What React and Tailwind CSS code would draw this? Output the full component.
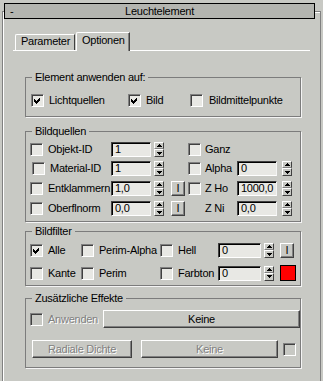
import React from 'react';

// 3ds Max style rollout: "Leuchtelement" / Optionen tab

function Check({ checked, disabled, className = '' }) {
  return (
    <span
      className={
        'flex items-center justify-center w-[13px] h-[13px] shrink-0 border border-t-[#808080] border-l-[#808080] border-b-white border-r-white shadow-[inset_1px_1px_0_#404040] ' +
        (disabled ? 'bg-[#c8c9c4] ' : 'bg-[#e8e8e4] ') +
        className
      }
    >
      {checked && (
        <svg width="7" height="7" viewBox="0 0 7 7" shapeRendering="crispEdges">
          <polygon points="0,2 2,4 6,0 6,3 2,7 0,5" fill="#000" />
        </svg>
      )}
    </span>
  );
}

function Label({ children, className = '', disabled }) {
  return (
    <span
      className={
        'shrink-0 whitespace-nowrap leading-[13px] ' +
        (disabled ? 'text-[#808080] [text-shadow:1px_1px_0_#fff] ' : '') +
        className
      }
    >
      {children}
    </span>
  );
}

function Field({ value, className = '' }) {
  return (
    <span
      className={
        'h-[15px] shrink-0 overflow-hidden whitespace-nowrap bg-[#e8e8e4] border border-t-[#404040] border-l-[#404040] border-b-white border-r-[#f4f4f4] shadow-[inset_1px_1px_0_#000] pl-[3px] leading-[13px] ' +
        className
      }
    >
      {value}
    </span>
  );
}

function Spin({ className = '' }) {
  return (
    <span className={'flex flex-col w-[10px] h-[15px] shrink-0 ' + className}>
      <span className="h-[7px] flex items-center justify-center border border-t-white border-l-white border-b-[#808080] border-r-[#404040]">
        <svg width="5" height="3" viewBox="0 0 5 3" shapeRendering="crispEdges">
          <path d="M0 3 L2.5 0 L5 3Z" fill="#000" />
        </svg>
      </span>
      <span className="h-[8px] flex items-center justify-center border border-t-white border-l-white border-b-[#404040] border-r-[#404040]">
        <svg width="5" height="3" viewBox="0 0 5 3" shapeRendering="crispEdges">
          <path d="M0 0 L5 0 L2.5 3Z" fill="#000" />
        </svg>
      </span>
    </span>
  );
}

function IBtn({ className = '' }) {
  return (
    <span
      className={
        'flex items-center justify-center w-[14px] h-[15px] shrink-0 border border-t-white border-l-white border-b-[#404040] border-r-[#404040] shadow-[inset_-1px_-1px_0_#808080] leading-[13px] ' +
        className
      }
    >
      I
    </span>
  );
}

function Btn({ children, disabled, className = '' }) {
  return (
    <span
      className={
        'flex items-center justify-center h-[18px] shrink-0 border border-t-white border-l-white border-b-[#404040] border-r-[#404040] shadow-[inset_-1px_-1px_0_#808080] leading-[13px] ' +
        (disabled ? 'text-[#808080] [text-shadow:1px_1px_0_#fff] ' : '') +
        className
      }
    >
      {children}
    </span>
  );
}

function Group({ title, className = '', children }) {
  return (
    <div
      className={
        'relative ml-[22px] w-[276px] border border-[#7c7c7c] shadow-[1px_1px_0_#f4f4f4] ' +
        className
      }
    >
      <span className="absolute -top-[7px] left-[6px] px-[3px] bg-[#c8c9c4] leading-[13px] whitespace-nowrap">
        {title}
      </span>
      {children}
    </div>
  );
}

export default function App() {
  return (
    <div className="w-[323px] h-[381px] overflow-hidden bg-[#c8c9c4] pt-[11px] pl-[2px] font-['Liberation_Sans',Arial,sans-serif] text-[11px] leading-[13px] tracking-[-0.25px] text-black">
      <div className="w-[319px] h-[370px] border-t border-l border-r border-[#808080] shadow-[inset_1px_1px_0_#fff]">
        {/* rollout header */}
        <div className="-mt-[9px] ml-[1px] w-[311px] h-[16px] border border-black bg-[#b4b5b0] flex items-center">
          <span className="w-[24px] pl-[5px] leading-[14px]">-</span>
          <span className="flex-1 text-center leading-[14px]">Leuchtelement</span>
          <span className="w-[24px]" />
        </div>

        {/* tabs */}
        <div className="mt-[13px] ml-[10px] w-[297px] h-[19px] border-b border-white flex items-end pl-[2px]">
          <div className="w-[60px] h-[16px] border-t border-l border-white border-r border-r-[#404040] rounded-tl-[2px] pl-[5px] leading-[13px]">
            Parameter
          </div>
          <div className="relative z-10 -mb-[1px] ml-[1px] w-[54px] h-[19px] bg-[#c8c9c4] border-t border-l border-white border-r border-r-[#404040] shadow-[inset_-1px_0_0_#808080] rounded-tl-[2px] pl-[5px] pt-[1px] leading-[13px]">
            Optionen
          </div>
        </div>

        {/* Element anwenden auf */}
        <Group title="Element anwenden auf:" className="mt-[26px] h-[40px] pt-[16px]">
          <div className="flex items-center h-[13px] pl-[5px]">
            <div className="flex items-center w-[97px]">
              <Check checked />
              <Label className="ml-[5px]">Lichtquellen</Label>
            </div>
            <div className="flex items-center w-[62px]">
              <Check checked />
              <Label className="ml-[5px]">Bild</Label>
            </div>
            <div className="flex items-center">
              <Check />
              <Label className="ml-[6px]">Bildmittelpunkte</Label>
            </div>
          </div>
        </Group>

        {/* Bildquellen */}
        <Group title="Bildquellen" className="mt-[14px] h-[91px] pt-[10px]">
          <div className="flex items-center h-[15px] pl-[4px]">
            <Check />
            <Label className="ml-[5px] w-[63px]">Objekt-ID</Label>
            <Field value="1" className="w-[40px]" />
            <Spin className="ml-[3px]" />
            <Check className="ml-[24px]" />
            <Label className="ml-[4px]">Ganz</Label>
          </div>
          <div className="flex items-center h-[15px] mt-[4px] pl-[6px]">
            <Check />
            <Label className="ml-[5px] w-[61px]">Material-ID</Label>
            <Field value="1" className="w-[40px]" />
            <Spin className="ml-[3px]" />
            <Check className="ml-[24px]" />
            <Label className="ml-[4px] w-[32px]">Alpha</Label>
            <Field value="0" className="w-[40px]" />
            <Spin className="ml-[5px]" />
          </div>
          <div className="flex items-center h-[15px] mt-[5px] pl-[4px]">
            <Check />
            <Label className="ml-[5px] w-[63px]">Entklammern</Label>
            <Field value="1,0" className="w-[40px]" />
            <Spin className="ml-[3px]" />
            <IBtn className="ml-[7px]" />
            <Check className="ml-[3px]" />
            <Label className="ml-[4px] w-[32px]">Z Ho</Label>
            <Field value="1000,0" className="w-[40px]" />
            <Spin className="ml-[5px]" />
          </div>
          <div className="flex items-center h-[15px] mt-[5px] pl-[4px]">
            <Check />
            <Label className="ml-[5px] w-[63px]">Oberflnorm</Label>
            <Field value="0,0" className="w-[40px]" />
            <Spin className="ml-[3px]" />
            <IBtn className="ml-[7px]" />
            <span className="ml-[3px] w-[13px] shrink-0" />
            <Label className="ml-[4px] w-[32px]">Z Ni</Label>
            <Field value="0,0" className="w-[40px]" />
            <Spin className="ml-[5px]" />
          </div>
        </Group>

        {/* Bildfilter */}
        <Group title="Bildfilter" className="mt-[9px] h-[55px] pt-[11px]">
          <div className="flex items-center h-[15px] pl-[4px]">
            <Check checked />
            <Label className="ml-[5px] w-[33px]">Alle</Label>
            <Check />
            <Label className="ml-[5px] w-[61px]">Perim-Alpha</Label>
            <Check />
            <Label className="ml-[5px] w-[40px]">Hell</Label>
            <Field value="0" className="w-[43px]" />
            <Spin className="ml-[3px]" />
            <IBtn className="ml-[6px]" />
          </div>
          <div className="flex items-center h-[16px] mt-[7px] pl-[4px]">
            <Check />
            <Label className="ml-[5px] w-[33px]">Kante</Label>
            <Check />
            <Label className="ml-[5px] w-[61px]">Perim</Label>
            <Check />
            <Label className="ml-[5px] w-[40px]">Farbton</Label>
            <Field value="0" className="w-[43px]" />
            <Spin className="ml-[3px]" />
            <span className="ml-[6px] w-[16px] h-[16px] shrink-0 bg-[#ff0000] border border-black" />
          </div>
        </Group>

        {/* Zusätzliche Effekte */}
        <Group title="Zusätzliche Effekte" className="mt-[12px] h-[70px] pt-[11px]">
          <div className="flex items-center h-[18px] pl-[4px]">
            <Check disabled />
            <Label disabled className="ml-[5px] w-[55px]">Anwenden</Label>
            <Btn className="w-[197px]">Keine</Btn>
          </div>
          <div className="flex items-center h-[18px] mt-[12px] pl-[6px]">
            <Btn disabled className="w-[100px]">Radiale Dichte</Btn>
            <Btn disabled className="ml-[9px] w-[137px]">Keine</Btn>
            <Check disabled className="ml-[5px]" />
          </div>
        </Group>
      </div>
    </div>
  );
}
